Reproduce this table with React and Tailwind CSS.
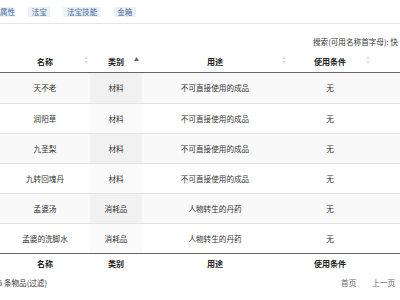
import React from "react";

const rows = [
  ["天不老", "材料", "不可直接使用的成品", "无"],
  ["润阳草", "材料", "不可直接使用的成品", "无"],
  ["九圣梨", "材料", "不可直接使用的成品", "无"],
  ["九转回魂丹", "材料", "不可直接使用的成品", "无"],
  ["孟婆汤", "消耗品", "人物转生的丹药", "无"],
  ["孟婆的洗脚水", "消耗品", "人物转生的丹药", "无"],
];

const cols = "grid grid-cols-[90px_52px_146px_84px_88px]";

function BothIcon() {
  return (
    <svg width="4" height="8" viewBox="0 0 4 8" className="absolute right-[2px] top-1/2 -translate-y-1/2">
      <path d="M2 0 L4 3 L0 3 Z" fill="#dcdcdc" />
      <path d="M2 8 L4 5 L0 5 Z" fill="#dcdcdc" />
    </svg>
  );
}

function AscIcon() {
  return (
    <svg width="5" height="4" viewBox="0 0 5 4" className="absolute right-[3px] top-[9px]">
      <path d="M2.5 0 L5 4 L0 4 Z" fill="#666" />
    </svg>
  );
}

function HeadCell({ children, icon }) {
  return (
    <div className="relative flex items-center justify-center h-[24px] pt-[9px] pb-[5px] leading-[10px] font-bold text-[8px] text-[#222]">
      {children}
      {icon === "asc" ? <AscIcon /> : icon === "both" ? <BothIcon /> : null}
    </div>
  );
}

export default function App() {
  const tabs = ["属性", "法宝", "法宝技能", "金箱"];
  return (
    <div
      className="w-[400px] h-[300px] overflow-hidden bg-white text-[#333]"
      style={{ fontFamily: '"Noto Sans CJK SC", "Noto Sans", sans-serif' }}
    >
      <div className="w-[473px]">
        {/* tabs */}
        <div className="h-[24px] border-b border-[#e6e6e6] flex items-center gap-[13px] -ml-[1px]">
          {tabs.map((t, i) => (
            <span
              key={t}
              className={
                "bg-[#eaf1f9] text-[#46689a] text-[7.6px] leading-[10px] " +
                (i === 0 ? "pl-[1px] pr-[0px]" : "px-[3.5px]")
              }
            >
              {t}
            </span>
          ))}
        </div>

        {/* search */}
        <div className="mt-[12px] flex h-[12px] items-center">
          <span className="ml-[313px] text-[7.6px] leading-[12px] text-[#333] whitespace-nowrap">
            搜索(可用名称首字母): 快
          </span>
        </div>

        {/* header */}
        <div className={cols + " border-b border-[#666]"}>
          <HeadCell icon="both">名称</HeadCell>
          <HeadCell icon="asc">类别</HeadCell>
          <HeadCell icon="both">用途</HeadCell>
          <HeadCell icon="both">使用条件</HeadCell>
          <HeadCell icon="none"></HeadCell>
        </div>

        {/* body */}
        <div>
          {rows.map((r, i) => {
            const odd = i % 2 === 0;
            return (
              <div
                key={i}
                className={
                  cols +
                  " h-[30px] text-[7.6px] leading-[10px] " +
                  (i > 0 ? "border-t border-[#e2e2e2] " : "") +
                  (odd ? "bg-[#f9f9f9]" : "bg-white")
                }
              >
                <div className="flex items-center justify-center">{r[0]}</div>
                <div
                  className={
                    "flex items-center justify-center " +
                    (odd ? "bg-[#f1f1f1]" : "bg-[#fafafa]")
                  }
                >
                  {r[1]}
                </div>
                <div className="flex items-center justify-center">{r[2]}</div>
                <div className="flex items-center justify-center">{r[3]}</div>
                <div className="flex items-center justify-center"></div>
              </div>
            );
          })}
        </div>

        {/* footer */}
        <div className={cols + " border-t border-[#666] font-bold text-[8px] leading-[10px] text-[#222]"}>
          <div className="flex justify-center pt-[5px] pb-[4px]">名称</div>
          <div className="flex justify-center pt-[5px] pb-[4px]">类别</div>
          <div className="flex justify-center pt-[5px] pb-[4px]">用途</div>
          <div className="flex justify-center pt-[5px] pb-[4px]">使用条件</div>
          <div className="flex justify-center pt-[5px] pb-[4px]"></div>
        </div>

        {/* info + pagination */}
        <div className="flex items-center h-[20px] text-[7.6px] leading-[10px]">
          <span className="-ml-[2px] whitespace-nowrap">5 条物品(过滤)</span>
          <div className="ml-auto flex text-[#666]">
            <span className="px-[8px]">首页</span>
            <span className="px-[8px]">上一页</span>
            <span className="px-[8px]">下一页</span>
            <span className="px-[8px]">尾页</span>
          </div>
        </div>
      </div>
    </div>
  );
}
